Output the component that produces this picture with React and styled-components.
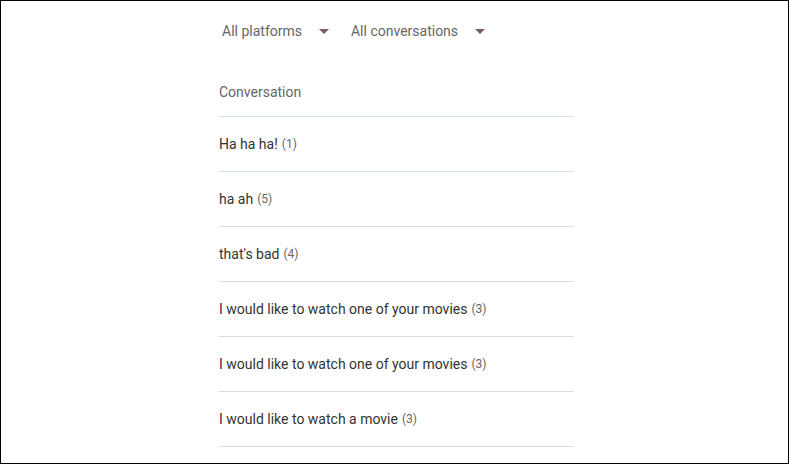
import React from "react";
import styled, { createGlobalStyle } from "styled-components";

const Global = createGlobalStyle`
  html, body { margin: 0; padding: 0; background: #fff; }
  body { font-family: Roboto, "Noto Sans", sans-serif; }
`;

const Frame = styled.div`
  box-sizing: border-box;
  width: 789px;
  height: 464px;
  border: 1px solid #000;
  overflow: hidden;
  background: #fff;
`;

const Column = styled.div`
  width: 355px;
  margin-left: 218px;
`;

const Toolbar = styled.div`
  display: flex;
  align-items: center;
  height: 60px;
  padding-left: 3px;
  gap: 22px;
`;

const Select = styled.div`
  display: flex;
  align-items: center;
  gap: 17px;
  font-size: 14px;
  color: #666;
  line-height: 20px;
`;

const Caret = styled.span`
  width: 0;
  height: 0;
  border-left: 5px solid transparent;
  border-right: 5px solid transparent;
  border-top: 5px solid #7a5d63;
  margin-top: 1px;
`;

const Header = styled.div`
  box-sizing: border-box;
  height: 56px;
  padding-top: 21px;
  font-size: 14px;
  line-height: 20px;
  color: #666;
  border-bottom: 1px solid #d5dfe5;
`;

const Row = styled.div`
  box-sizing: border-box;
  height: 55px;
  display: flex;
  align-items: center;
  gap: 4px;
  font-size: 14px;
  color: #333;
  border-bottom: 1px solid #d5dfe5;
`;

const Count = styled.span`
  font-size: 12px;
  color: #666;
`;

const rows = [
  ["Ha ha ha!", 1],
  ["ha ah", 5],
  ["that's bad", 4],
  ["I would like to watch one of your movies", 3],
  ["I would like to watch one of your movies", 3],
  ["I would like to watch a movie", 3],
];

export default function App() {
  return (
    <Frame>
      <Global />
      <Column>
        <Toolbar>
          <Select>All platforms<Caret /></Select>
          <Select>All conversations<Caret /></Select>
        </Toolbar>
        <Header>Conversation</Header>
        {rows.map(([t, c], i) => (
          <Row key={i}>
            {t}
            <Count>({c})</Count>
          </Row>
        ))}
      </Column>
    </Frame>
  );
}
